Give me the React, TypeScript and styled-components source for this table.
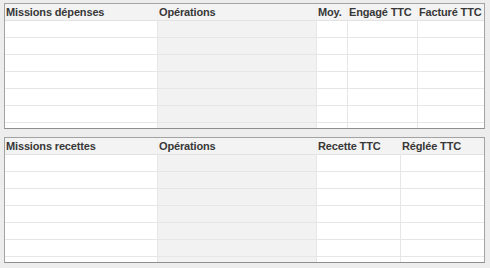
import React from "react";
import styled, { createGlobalStyle } from "styled-components";

const GlobalStyle = createGlobalStyle`
  html, body {
    margin: 0;
    padding: 0;
    background: #ededed;
    font-family: "Liberation Sans", Arial, sans-serif;
  }
`;

type TableSpec = {
  columns: { title: string; width: string; shaded?: boolean }[];
};

const spending: TableSpec = {
  columns: [
    { title: "Missions dépenses", width: "153px" },
    { title: "Opérations", width: "159px", shaded: true },
    { title: "Moy.", width: "31px" },
    { title: "Engagé TTC", width: "70px" },
    { title: "Facturé TTC", width: "1fr" },
  ],
};

const receipts: TableSpec = {
  columns: [
    { title: "Missions recettes", width: "153px" },
    { title: "Opérations", width: "159px", shaded: true },
    { title: "Recette TTC", width: "84px" },
    { title: "Réglée TTC", width: "1fr" },
  ],
};

const ROWS = 7;

function DataTable({ spec }: { spec: TableSpec }) {
  const template = spec.columns.map((c) => c.width).join(" ");
  const last = spec.columns.length - 1;
  return (
    <Panel>
      <Grid $template={template}>
        {spec.columns.map((col, i) => (
          <HeaderCell key={col.title} $last={i === last}>
            {col.title}
          </HeaderCell>
        ))}
        {Array.from({ length: ROWS }).map((_, r) =>
          spec.columns.map((col, i) => (
            <Cell
              key={`${r}-${i}`}
              $shaded={!!col.shaded}
              $last={i === last}
            />
          ))
        )}
      </Grid>
    </Panel>
  );
}

function App() {
  return (
    <>
      <GlobalStyle />
      <Page>
        <DataTable spec={spending} />
        <DataTable spec={receipts} />
      </Page>
    </>
  );
}

const Page = styled.div`
  display: flex;
  flex-direction: column;
  gap: 8px;
  padding: 3px 5px 0 4px;
  height: 268px;
  box-sizing: border-box;
`;

const Panel = styled.div`
  height: 126px;
  box-sizing: border-box;
  border: 1px solid #a3a3a3;
  border-bottom-color: #8e8e8e;
  background: #ffffff;
  overflow: hidden;
`;

const Grid = styled.div<{ $template: string }>`
  display: grid;
  grid-template-columns: ${(p) => p.$template};
  grid-auto-rows: 17px;
`;

const HeaderCell = styled.div<{ $last: boolean }>`
  background: #f3f3f3;
  border-bottom: 1px solid #e2e2e2;
  border-right: ${(p) => (p.$last ? "none" : "1px solid #efefef")};
  padding: 0 0 0 1px;
  font-size: 11px;
  font-weight: bold;
  letter-spacing: -0.15px;
  color: #383838;
  line-height: 16px;
  white-space: nowrap;
  overflow: hidden;
`;

const Cell = styled.div<{ $shaded: boolean; $last: boolean }>`
  background: ${(p) => (p.$shaded ? "#f2f2f2" : "#ffffff")};
  border-bottom: 1px solid #e6e6e6;
  border-right: ${(p) => (p.$last ? "none" : "1px solid #e6e6e6")};
`;

export default App;
